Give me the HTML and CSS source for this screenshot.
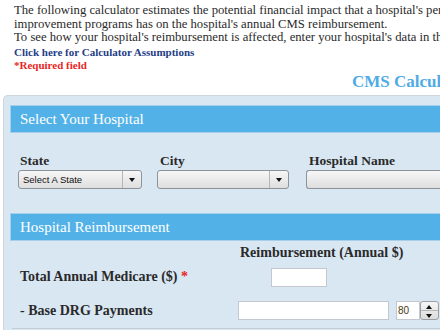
FILE: index.html
```html
<!DOCTYPE html>
<html>
<head>
	<title>CMS Calculator</title>
	<link rel="stylesheet" href="styles.css">
</head>
<body>
	<div class="intro">
		<p>The following calculator estimates the potential financial impact that a hospital's performance<br>
		improvement programs has on the hospital's annual CMS reimbursement.<br>
		To see how your hospital's reimbursement is affected, enter your hospital's data in the fields below.</p>
		<p class="link">Click here for Calculator Assumptions</p>
		<p class="req">*Required field</p>
	</div>
	<h1 class="title">CMS Calculator</h1>
	<div class="calc">
		<div class="bar">Select Your Hospital</div>
		<div class="fields">
			<div class="field state">
				<label>State</label>
				<div class="dropdown"><span class="val">Select A State</span><span class="arrow"></span></div>
			</div>
			<div class="field city">
				<label>City</label>
				<div class="dropdown"><span class="val"></span><span class="arrow"></span></div>
			</div>
			<div class="field hosp">
				<label>Hospital Name</label>
				<div class="dropdown"><span class="val"></span></div>
			</div>
		</div>
		<div class="bar">Hospital Reimbursement</div>
		<div class="reimb">
			<div class="colhead">Reimbursement (Annual $)</div>
			<div class="row">
				<label>Total Annual Medicare ($) <span class="star">*</span></label>
				<input type="text" class="small">
			</div>
			<div class="row last">
				<label>- Base DRG Payments</label>
				<input type="text" class="wide">
				<div class="spin"><span class="num">80</span><span class="btns"><span class="up"></span><span class="down"></span></span></div>
			</div>
		</div>
	</div>
</body>
</html>
```
FILE: styles.css
```css
html {
	background: #fff;
}
body {
	margin: 0;
	font-family: "Liberation Serif", Georgia, serif;
	color: #2a2a2a;
	overflow: hidden;
}
.intro {
	padding: 4px 0 0 14px;
	white-space: nowrap;
}
.intro p {
	margin: 0;
	font-size: 12.7px;
	line-height: 13.5px;
}
.intro p.link {
	margin-top: 1px;
	color: #1e3d86;
	font-weight: bold;
	font-size: 11px;
	line-height: 13px;
}
.intro p.req {
	color: #e8261e;
	font-weight: bold;
	font-size: 11px;
	line-height: 13px;
}
.title {
	margin: 0 0 0 352px;
	font-size: 17px;
	line-height: 20px;
	color: #4fabe6;
	white-space: nowrap;
}
.calc {
	margin: 3px 0 0 3px;
	background: #d9e7f3;
	border: 1px solid #cdd5dd;
	border-right: none;
	border-top-left-radius: 5px;
	padding: 9px 0 0 6px;
	height: 240px;
}
.bar {
	height: 26px;
	line-height: 26px;
	background: #52b2e8;
	border: 1px solid #a8cfe9;
	border-right: none;
	color: #fff;
	font-size: 15px;
	padding-left: 9px;
	white-space: nowrap;
}
.fields {
	display: flex;
	padding: 21px 0 24px 8px;
	white-space: nowrap;
}
.field {
	flex-shrink: 0;
}
.field label {
	display: block;
	font-weight: bold;
	font-size: 13.5px;
	line-height: 14px;
	padding-left: 2px;
	margin-bottom: 2px;
}
.city label,
.hosp label {
	padding-left: 3px;
}
.state {
	width: 139px;
}
.city {
	width: 149px;
}
.hosp {
	width: 140px;
}
.dropdown {
	display: flex;
	height: 17px;
	border: 1px solid #8d9399;
	border-radius: 3px;
	background: linear-gradient(#f7f7f7, #dedede);
	font-family: "Liberation Sans", Arial, sans-serif;
	font-size: 9.5px;
	line-height: 17px;
	color: #111;
}
.state .dropdown {
	width: 122px;
}
.city .dropdown {
	width: 130px;
}
.hosp .dropdown {
	width: 160px;
	border-right: none;
}
.dropdown .val {
	flex: 1;
	padding-left: 4px;
}
.dropdown .arrow {
	width: 18px;
	border-left: 1px solid #b3b6b9;
	position: relative;
}
.dropdown .arrow:after {
	content: "";
	position: absolute;
	left: 6px;
	top: 7px;
	border-left: 3px solid transparent;
	border-right: 3px solid transparent;
	border-top: 4px solid #111;
}
.reimb {
	padding: 0 0 0 10px;
	white-space: nowrap;
}
.colhead {
	font-weight: bold;
	font-size: 14px;
	line-height: 16px;
	padding: 4px 0 0 220px;
}
.row {
	display: flex;
	align-items: center;
	height: 33px;
	font-weight: bold;
	font-size: 14px;
}
.row.last {
	height: 34px;
	border-bottom: 1px solid #c3ccd5;
	margin-left: -8px;
	padding-left: 8px;
}
.row label {
	width: 218px;
	flex-shrink: 0;
}
.star {
	color: #e8261e;
}
.row input {
	height: 17px;
	border: 1px solid #c2c8ce;
	background: #fff;
	padding: 0;
	margin: 0;
	flex-shrink: 0;
}
.row input.small {
	width: 54px;
	margin-left: 33px;
}
.row input.wide {
	width: 149px;
}
.spin {
	display: flex;
	margin-left: 7px;
	height: 19px;
	flex-shrink: 0;
}
.spin .num {
	width: 21px;
	background: #fff;
	border: 1px solid #c2c8ce;
	font-family: "Liberation Sans", Arial, sans-serif;
	font-size: 10px;
	font-weight: normal;
	line-height: 17px;
	padding-left: 1px;
	color: #4a3a10;
}
.spin .btns {
	width: 17px;
	display: flex;
	flex-direction: column;
	border: 1px solid #9aa0a6;
	border-radius: 3px;
	background: linear-gradient(#f6f6f6, #dcdcdc);
}
.spin .btns span {
	flex: 1;
	position: relative;
}
.spin .up {
	border-bottom: 1px solid #b3b6b9;
}
.spin .up:after,
.spin .down:after {
	content: "";
	position: absolute;
	left: 5px;
	border-left: 3px solid transparent;
	border-right: 3px solid transparent;
}
.spin .up:after {
	top: 3px;
	border-bottom: 4px solid #111;
}
.spin .down:after {
	top: 3px;
	border-top: 4px solid #111;
}
```
